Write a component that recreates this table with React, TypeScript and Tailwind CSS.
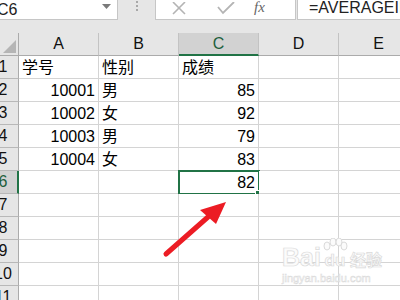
import React from 'react';

type Cell = { text: string; align: 'left' | 'right' };

const columns = ['A', 'B', 'C', 'D', 'E'];

const L = (text: string): Cell => ({ text, align: 'left' });
const R = (text: string): Cell => ({ text, align: 'right' });

const sheet: Cell[][] = [
  [L('学号'), L('性别'), L('成绩')],
  [R('10001'), L('男'), R('85')],
  [R('10002'), L('女'), R('92')],
  [R('10003'), L('男'), R('79')],
  [R('10004'), L('女'), R('83')],
  [L(''), L(''), R('82')],
  [],
  [],
  [],
  [],
  [],
];

const font = "font-['Liberation_Sans','Noto_Sans_CJK_SC',sans-serif]";

const FormulaBar: React.FC = () => (
  <div className="flex h-[33px] items-start bg-[#e6e6e6]">
    <div className="relative flex h-[20px] w-[118px] shrink-0 items-center border-b border-r border-[#c6c6c6] bg-white">
      <span className={`-ml-[3px] text-[16px] leading-[20px] text-[#222] ${font}`}>C6</span>
      <svg className="absolute left-[102px] top-[4px]" width="9" height="6" viewBox="0 0 9 6">
        <polygon points="0,0 9,0 4.5,5" fill="#7a7a7a" />
      </svg>
    </div>
    <div className="flex w-[37px] shrink-0 flex-col items-center gap-[2px] pt-[1px]">
      <span className="h-[2px] w-[2px] bg-[#a8a8a8]" />
      <span className="h-[2px] w-[2px] bg-[#a8a8a8]" />
      <span className="h-[2px] w-[2px] bg-[#a8a8a8]" />
    </div>
    <div className="flex h-[20px] w-[141px] shrink-0 items-center border border-t-0 border-[#c6c6c6] bg-white">
      <svg className="ml-[15px]" width="16" height="16" viewBox="0 0 16 16">
        <path d="M2 0 L14 12 M14 0 L2 12" stroke="#b4b4b4" strokeWidth="1.6" fill="none" />
      </svg>
      <svg className="ml-[30px]" width="18" height="16" viewBox="0 0 18 16">
        <path d="M1 5 L6 11 L17 0" stroke="#b4b4b4" strokeWidth="1.8" fill="none" />
      </svg>
      <span className="ml-[19px] self-start font-['Liberation_Serif',serif] text-[15px] leading-[15px] italic text-[#666]">
        fx
      </span>
    </div>
    <div className="ml-[1px] flex h-[20px] flex-1 items-center overflow-hidden border-b border-l border-[#c6c6c6] bg-white pl-[11px]">
      <span className={`whitespace-nowrap text-[16px] leading-[20px] -mt-[4px] text-[#222] ${font}`}>=AVERAGEIF</span>
    </div>
  </div>
);

const ColumnHeader: React.FC = () => (
  <div className="flex h-[23px]">
    <div className="relative h-[23px] w-[19px] shrink-0 border-b border-r border-[#ababab] bg-[#e6e6e6]">
      <svg className="absolute bottom-[2px] right-[2px]" width="13" height="13" viewBox="0 0 13 13">
        <polygon points="13,0 13,13 0,13" fill="#b5b5b5" />
      </svg>
    </div>
    {columns.map((c) => {
      const active = c === 'C';
      return (
        <div
          key={c}
          className={`flex h-[23px] w-[80px] shrink-0 items-center justify-center border-r border-[#c3c3c3] ${
            active ? 'border-b-2 border-b-[#217346] bg-[#d2d2d2] text-[#1d5f3c]' : 'border-b border-b-[#ababab] bg-[#e6e6e6] text-[#111]'
          }`}
        >
          <span className={`text-[16px] leading-[20px] ${font}`}>{c}</span>
        </div>
      );
    })}
  </div>
);

const Row: React.FC<{ n: number; cells: Cell[] }> = ({ n, cells }) => {
  const active = n === 6;
  return (
    <div className="flex h-[23px]">
      <div
        className={`h-[23px] w-[19px] shrink-0 overflow-hidden border-b border-[#b8b8b8] ${
          active ? 'border-r-2 border-r-[#217346] bg-[#d2d2d2] text-[#1d5f3c]' : 'border-r border-r-[#ababab] bg-[#e6e6e6] text-[#111]'
        }`}
      >
        <div className={`-ml-[12px] w-[30px] text-center text-[16px] leading-[22px] ${font}`}>{n}</div>
      </div>
      {columns.map((c, i) => {
        const cell = cells[i];
        return (
          <div
            key={c}
            className={`relative flex h-[23px] w-[80px] shrink-0 items-end border-b border-r border-[#d4d4d4] bg-white px-[3px] ${
              cell?.align === 'right' ? 'justify-end' : 'justify-start'
            }`}
          >
            {cell && (
              <span className={`whitespace-nowrap text-[16px] leading-[21px] text-black ${font}`}>{cell.text}</span>
            )}
            {active && c === 'C' && (
              <>
                <div className="absolute -left-[1px] -top-[1px] h-[25px] w-[82px] border-2 border-[#217346]" />
                <div className="absolute -bottom-[3px] -right-[3px] h-[6px] w-[6px] border border-white bg-[#217346]" />
              </>
            )}
          </div>
        );
      })}
    </div>
  );
};

const App: React.FC = () => {
  return (
    <div className="relative h-[300px] w-[400px] overflow-hidden bg-white">
      <FormulaBar />
      <ColumnHeader />
      {sheet.map((cells, i) => (
        <Row key={i} n={i + 1} cells={cells} />
      ))}

      {/* pointer arrow */}
      <svg className="absolute left-0 top-0" width="400" height="300" viewBox="0 0 400 300">
        <line x1="166" y1="254" x2="208" y2="217" stroke="#ec1c24" strokeWidth="5" strokeLinecap="round" />
        <polygon points="226,202 200,210 216,224" fill="#ec1c24" />
      </svg>

      {/* watermark */}
      <div className="pointer-events-none absolute left-[282px] top-[238px] flex flex-col">
        <div className="flex items-end">
          <span className="font-['Liberation_Sans',sans-serif] text-[25px] font-bold leading-[26px] text-[#fbfbfb] [-webkit-text-stroke:0.7px_#dadada]">
            Bai
          </span>
          <div className="relative ml-[1px] flex flex-col items-center">
            <svg width="26" height="14" viewBox="0 0 26 14">
              <ellipse cx="5" cy="8" rx="3" ry="4" fill="#fbfbfb" stroke="#dadada" />
              <ellipse cx="11" cy="4" rx="3" ry="4" fill="#fbfbfb" stroke="#dadada" />
              <ellipse cx="17" cy="4" rx="3" ry="4" fill="#fbfbfb" stroke="#dadada" />
              <ellipse cx="22" cy="8" rx="3" ry="4" fill="#fbfbfb" stroke="#dadada" />
            </svg>
            <span className="font-['Liberation_Sans',sans-serif] text-[17px] font-bold leading-[18px] text-[#fbfbfb] [-webkit-text-stroke:0.7px_#dadada]">
              du
            </span>
          </div>
          <span className="ml-[2px] font-['Noto_Sans_CJK_SC',sans-serif] text-[16px] font-bold leading-[22px] text-[#fbfbfb] [-webkit-text-stroke:0.7px_#dadada]">
            经验
          </span>
        </div>
        <span className="mt-[2px] font-['Liberation_Sans',sans-serif] text-[11px] leading-[12px] text-[#fbfbfb] [-webkit-text-stroke:0.5px_#dadada]">
          jingyan.baidu.com
        </span>
      </div>
    </div>
  );
};

export default App;
